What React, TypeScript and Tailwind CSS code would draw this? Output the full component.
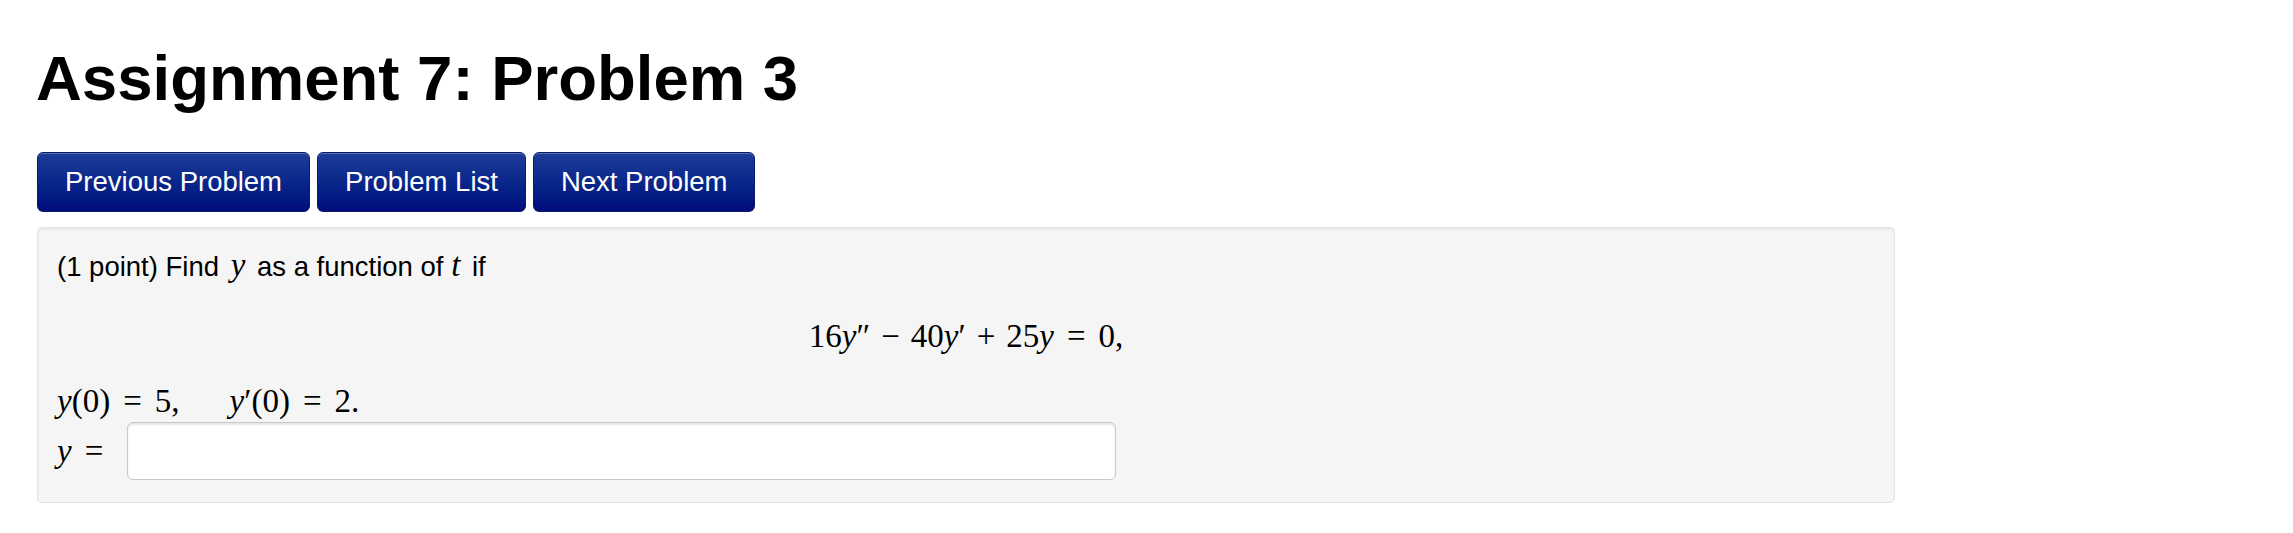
import React from "react"

const serif = "font-['Liberation_Serif',serif]"

function NavButton({ label }: { label: string }) {
  return (
    <button
      type="button"
      className="h-[60px] rounded-[6px] border border-[#0b1a66] bg-linear-to-b from-[#1d3c98] to-[#000a7c] px-[27px] text-[27.5px] leading-none text-white shadow-[inset_0_1px_0_rgba(255,255,255,0.25)]"
    >
      {label}
    </button>
  )
}

function Op({ children, wide }: { children: React.ReactNode; wide?: boolean }) {
  return <span className={wide ? "mx-[13px]" : "mx-[11px]"}>{children}</span>
}

export default function App() {
  return (
    <div className="h-[533px] w-full bg-white pl-[36px] font-['Liberation_Sans',Arial,sans-serif] text-black">
      <h1 className="pt-[47px] text-[63.5px] font-bold leading-[63px]">Assignment 7: Problem 3</h1>

      <div className="mt-[42px] flex gap-[7px] pl-[1px]">
        <NavButton label="Previous Problem" />
        <NavButton label="Problem List" />
        <NavButton label="Next Problem" />
      </div>

      <div className="mt-[15px] ml-[1px] h-[276px] w-[1858px] rounded-[5px] border border-[#e3e3e3] bg-[#f5f5f5] pl-[19px] pt-[20px] shadow-[inset_0_2px_2px_rgba(0,0,0,0.05)]">
        <p className="h-[34px] text-[27.5px] leading-[34px]">
          (1 point) Find <span className={`${serif} mx-[4px] text-[33px] leading-[34px] italic`}>y</span> as a
          function of <span className={`${serif} mr-[4px] text-[33px] leading-[34px] italic`}>t</span> if
        </p>

        <div className={`${serif} mt-[34px] h-[40px] pr-[19px] text-center text-[33px] leading-[40px]`}>
          16<i>y</i>″<Op>−</Op>40<i>y</i>′<Op>+</Op>25<i>y</i>
          <Op wide>=</Op>0,
        </div>

        <div className={`${serif} mt-[28px] h-[34px] text-[33px] leading-[34px]`}>
          <i>y</i>(0)<Op wide>=</Op>5,<span className="ml-[50px]" />
          <i>y</i>′(0)<Op wide>=</Op>2.
        </div>

        <div className="mt-[4px] flex items-start">
          <span className={`${serif} mt-[12px] w-[70px] text-[33px] leading-[34px]`}>
            <i>y</i>
            <span className="ml-[13px]">=</span>
          </span>
          <input
            type="text"
            aria-label="answer"
            className="h-[58px] w-[989px] rounded-[6px] border border-[#c8c8c8] bg-white px-3 text-[27.5px] shadow-[inset_0_2px_2px_rgba(0,0,0,0.1)] outline-none"
          />
        </div>
      </div>
    </div>
  )
}
